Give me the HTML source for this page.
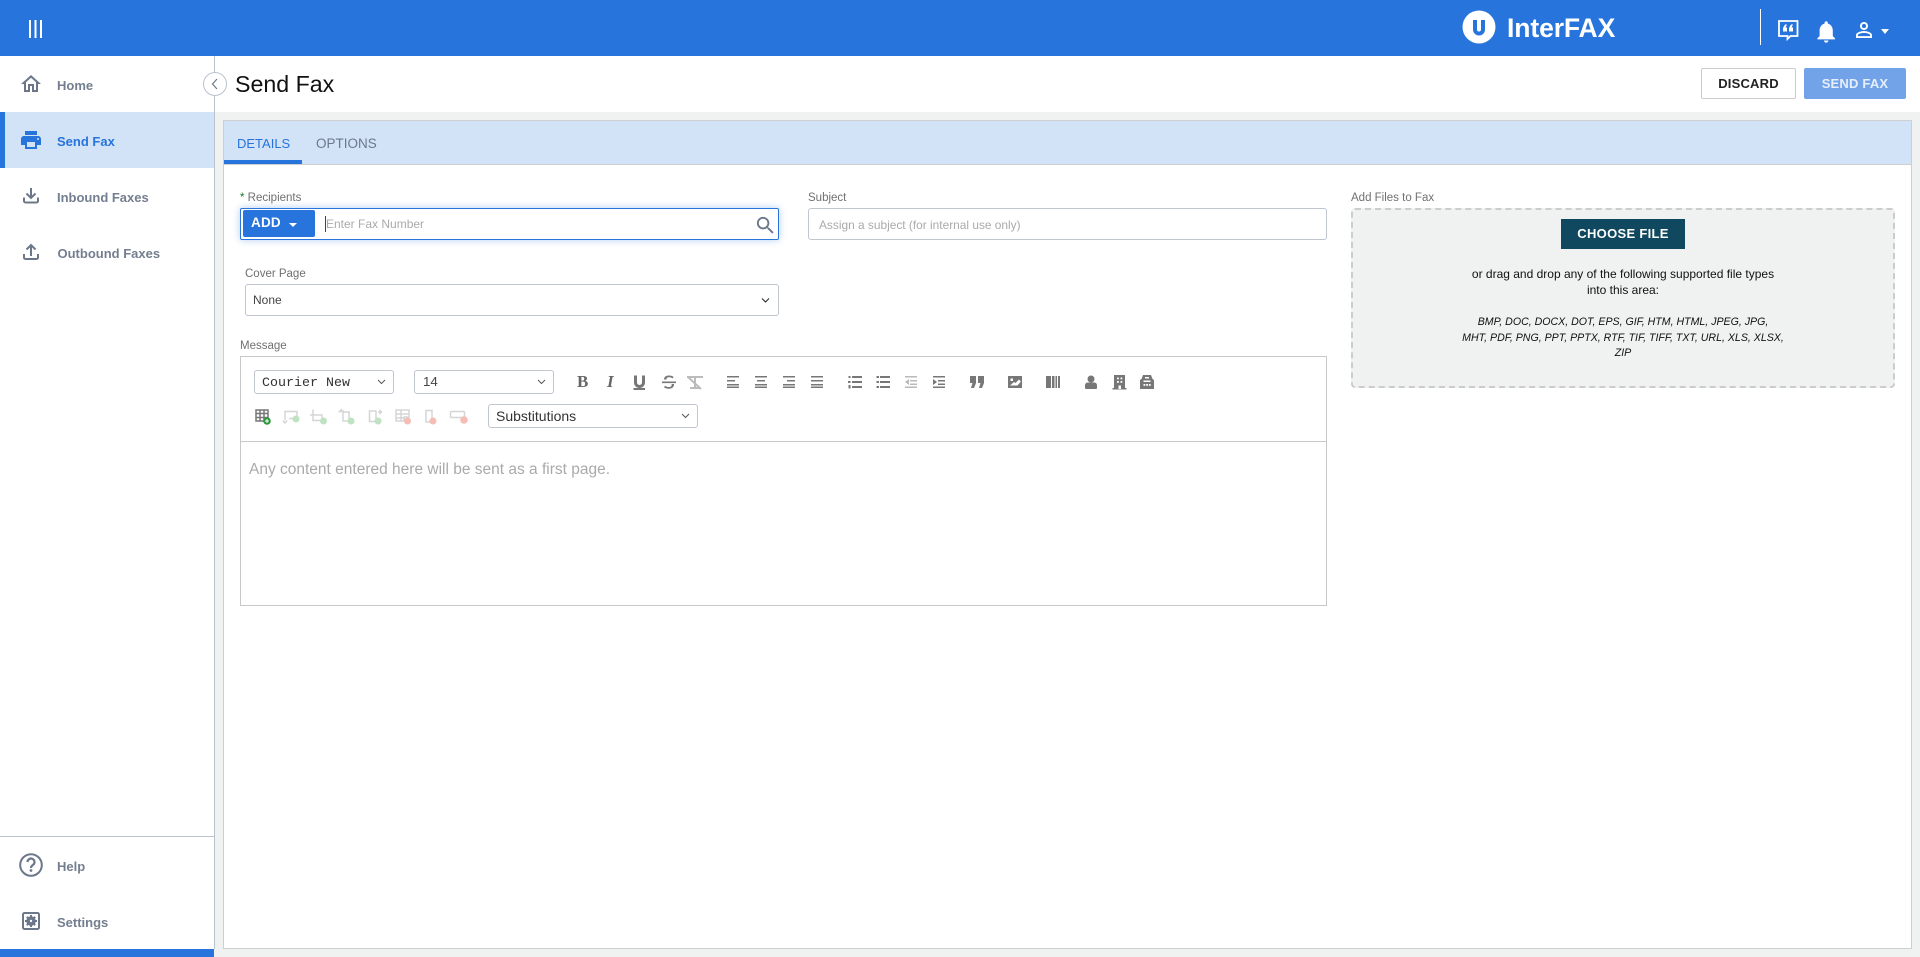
<!DOCTYPE html>
<html lang="en"><head><meta charset="utf-8"><title>Send Fax</title>
<style>
html,body{margin:0;padding:0;width:1920px;height:957px;overflow:hidden;background:#f0f2f2;font-family:"Liberation Sans",sans-serif}
.a{position:absolute;white-space:nowrap}
.box{position:absolute;box-sizing:border-box;background:#fff}
.nav{font-size:13px;font-weight:bold;color:#737e90;left:57px;line-height:20px}
.lab{font-size:11.5px;color:#707070;line-height:16px}
.ph{font-size:12px;color:#aaa;line-height:16px}
.sel{border:1px solid #bfc6cf;border-radius:3px}
.ctr{text-align:center}
</style></head><body>
<div class="a" style="left:0;top:0;width:1920px;height:56px;background:#2674dc"></div>
<div class="box" style="left:0;top:56px;width:214px;height:893px"></div>
<div class="a" style="left:214px;top:56px;width:1px;height:893px;background:#b9c3cf"></div>
<div class="a" style="left:0;top:949px;width:214px;height:8px;background:#2674dc"></div>
<div class="a" style="left:0;top:112px;width:214px;height:56px;background:#d2e2f7"></div>
<div class="a" style="left:0;top:112px;width:5px;height:56px;background:#2674dc"></div>
<div class="a" style="left:0;top:836px;width:214px;height:1px;background:#b9c3cf"></div>
<div class="a" style="left:215px;top:56px;width:1705px;height:56px;background:#fff"></div>

<div class="a nav" style="top:75.500px">Home</div>
<div class="a nav" style="top:131.500px;color:#2674dc">Send Fax</div>
<div class="a nav" style="top:187.500px">Inbound Faxes</div>
<div class="a nav" style="top:243.500px;left:57.500px">Outbound Faxes</div>
<div class="a nav" style="top:856.500px">Help</div>
<div class="a nav" style="top:912.500px">Settings</div>

<div class="a" style="left:235px;top:67.500px;font-size:23.200px;line-height:32px;color:#111">Send Fax</div>
<div class="box ctr" style="left:1701px;top:68px;width:95px;height:31px;border:1px solid #ccc;border-radius:2px;font-size:13px;font-weight:bold;line-height:29px;color:#222;letter-spacing:.2px">DISCARD</div>
<div class="box ctr" style="left:1804px;top:68px;width:102px;height:31px;background:#72a3e9;border-radius:2px;font-size:13px;font-weight:bold;line-height:31px;color:#e6effb;letter-spacing:.2px">SEND FAX</div>

<div class="a" style="left:1507px;top:11px;font-size:26.500px;font-weight:bold;line-height:34px;color:#fff;letter-spacing:-.1px">InterFAX</div>

<!-- card -->
<div class="box" style="left:223px;top:120px;width:1689px;height:829px;border:1px solid #ccd0d0"></div>
<div class="a" style="left:224px;top:121px;width:1687px;height:43px;background:#d2e2f7;border-bottom:1px solid #ccd0d0"></div>
<div class="a" style="left:224px;top:160px;width:78px;height:4px;background:#2674dc"></div>
<div class="a" style="left:237px;top:135px;font-size:13px;line-height:18px;color:#2674dc">DETAILS</div>
<div class="a" style="left:316px;top:135px;font-size:13.500px;line-height:18px;color:#6c778a">OPTIONS</div>

<!-- recipients -->
<div class="a lab" style="left:240px;top:190px"><span style="color:#1a7a2a">*</span> Recipients</div>
<div class="box" style="left:240px;top:208px;width:539px;height:32px;border:1px solid #2674dc;border-radius:2px;box-shadow:0 0 8px rgba(38,116,220,.35)"></div>
<div class="a" style="left:243px;top:210px;width:72px;height:27px;background:#2674dc;border-radius:2px"></div>
<div class="a" style="left:251px;top:214px;font-size:13.500px;font-weight:bold;line-height:18px;color:#fff;letter-spacing:.2px">ADD</div>
<div class="a" style="left:325px;top:216px;width:1px;height:16px;background:#444"></div>
<div class="a ph" style="left:326px;top:216px">Enter Fax Number</div>

<div class="a lab" style="left:808px;top:190px">Subject</div>
<div class="box sel" style="left:808px;top:208px;width:519px;height:32px"></div>
<div class="a ph" style="left:819px;top:217px;font-size:11.900px">Assign a subject (for internal use only)</div>

<div class="a lab" style="left:245px;top:265.500px">Cover Page</div>
<div class="box sel" style="left:245px;top:284px;width:534px;height:32px"></div>
<div class="a" style="left:253px;top:292px;font-size:12px;line-height:16px;color:#444">None</div>

<div class="a lab" style="left:240px;top:337.500px">Message</div>
<div class="box" style="left:240px;top:356px;width:1087px;height:250px;border:1px solid #c8c8c8"></div>
<div class="a" style="left:241px;top:441px;width:1085px;height:1px;background:#c8c8c8"></div>
<div class="box sel" style="left:254px;top:370px;width:140px;height:24px"></div>
<div class="a" style="left:262px;top:376px;font-family:'Liberation Mono',monospace;font-size:13.330px;line-height:16px;color:#333">Courier New</div>
<div class="box sel" style="left:414px;top:370px;width:140px;height:24px"></div>
<div class="a" style="left:423px;top:374px;font-size:13.330px;line-height:16px;color:#444">14</div>
<div class="box sel" style="left:488px;top:404px;width:210px;height:24px"></div>
<div class="a" style="left:496px;top:408px;font-size:14px;line-height:16px;color:#333">Substitutions</div>
<div class="a" style="left:249px;top:460px;font-size:15.500px;line-height:20px;color:#aaa">Any content entered here will be sent as a first page.</div>
<div class="a" style="left:577px;top:373px;font-family:'Liberation Serif',serif;font-size:17px;font-weight:bold;line-height:18px;color:#666">B</div>
<div class="a" style="left:607px;top:373px;font-family:'Liberation Serif',serif;font-size:17px;font-style:italic;font-weight:bold;line-height:18px;color:#666">I</div>

<!-- dropzone -->
<div class="a lab" style="left:1351px;top:190px">Add Files to Fax</div>
<div class="box" style="left:1351px;top:208px;width:544px;height:180px;background:#f0f2f2;border:2px dashed #ccc;border-radius:4px"></div>
<div class="box ctr" style="left:1561px;top:219px;width:124px;height:30px;background:#10495f;font-size:13px;font-weight:bold;line-height:30px;color:#fff;letter-spacing:.3px">CHOOSE FILE</div>
<div class="a ctr" style="left:1351px;top:266px;width:544px;font-size:12px;line-height:16px;color:#111">or drag and drop any of the following supported file types<br>into this area:</div>
<div class="a ctr" style="left:1351px;top:315px;width:544px;font-size:10.600px;line-height:15.600px;color:#111;font-style:italic">BMP, DOC, DOCX, DOT, EPS, GIF, HTM, HTML, JPEG, JPG,<br>MHT, PDF, PNG, PPT, PPTX, RTF, TIF, TIFF, TXT, URL, XLS, XLSX,<br>ZIP</div>

<svg class="a" style="left:0;top:0;pointer-events:none" width="1920" height="957" viewBox="0 0 1920 957">
<!-- top bar -->
<g fill="#fff">
<rect x="29" y="20" width="2" height="18"/><rect x="34.500" y="20" width="2" height="18"/><rect x="40" y="20" width="2" height="18"/>
<circle cx="1479" cy="27" r="16.500"/>
<rect x="1760" y="9" width="1" height="36"/>
<g transform="translate(1813,18.500) scale(1.100)"><path d="M12 22c1.100 0 2-.9 2-2h-4c0 1.100.89 2 2 2zm6-6v-5c0-3.070-1.640-5.640-4.500-6.320V4c0-.83-.67-1.500-1.500-1.500s-1.500.67-1.500 1.500v.68C7.630 5.360 6 7.920 6 11v5l-2 2v1h16v-1l-2-2z"/></g>
<g transform="translate(1852,18)"><path d="M12 5.900c1.160 0 2.100.94 2.100 2.100s-.94 2.100-2.100 2.100S9.900 9.160 9.900 8s.94-2.100 2.100-2.100m0 9c2.970 0 6.100 1.460 6.100 2.100v1.100H5.900V17c0-.64 3.130-2.100 6.100-2.100M12 4C9.790 4 8 5.790 8 8s1.790 4 4 4 4-1.790 4-4-1.790-4-4-4zm0 9c-2.670 0-8 1.340-8 4v3h16v-3c0-2.660-5.330-4-8-4z"/></g>
<path d="M1881 29h8l-4 5z"/>
<path d="M1783 31.500h4v-4h-1.500l1.500-3h-2l-2 3.500zM1789 31.500h4v-4h-1.500l1.500-3h-2l-2 3.500z"/>
</g>
<path d="M1779 21h18.500v15h-7l-3 3v-3h-8.500z" fill="none" stroke="#fff" stroke-width="1.800"/>
<path d="M1473 20v9.500a6 6 0 0 0 12 0V20h-4v9.500a2 2 0 0 1-4 0V20z" fill="#2674dc"/>

<!-- sidebar icons -->
<g transform="translate(19,72)" fill="#6c778a"><path d="M12 5.690l5 4.500V18h-2v-6H9v6H7v-7.810l5-4.500M12 3L2 12h3v8h6v-6h2v6h6v-8h3L12 3z"/></g>
<g transform="translate(19,128)" fill="#2674dc"><path d="M19 8H5c-1.660 0-3 1.340-3 3v6h4v4h12v-4h4v-6c0-1.660-1.340-3-3-3zm-3 11H8v-5h8v5zm3-7c-.55 0-1-.45-1-1s.45-1 1-1 1 .45 1 1-.45 1-1 1zm-1-9H6v4h12V3z"/></g>
<g fill="none" stroke="#6c778a" stroke-width="2">
<path d="M31 188v10M26.500 193.500l4.500 4.500 4.500-4.500M24 197.500v3.500a1.500 1.500 0 0 0 1.500 1.500h11a1.500 1.500 0 0 0 1.500-1.500v-3.500"/>
<path d="M31 256v-11M26.500 249.500l4.500-4.500 4.500 4.500M24 254v3.500a1.500 1.500 0 0 0 1.500 1.500h11a1.500 1.500 0 0 0 1.500-1.500V254"/>
<circle cx="31" cy="865" r="10.800"/>
<path d="M27.500 862a3.500 3.500 0 1 1 5.500 2.900c-1.300.9-2 1.500-2 3.100" stroke-width="2.200"/>
<rect x="23" y="913" width="16" height="16" rx="1.500"/>
</g>
<circle cx="31" cy="870.500" r="1.400" fill="#6c778a"/>
<circle cx="31" cy="921" r="4.800" fill="#6c778a"/><circle cx="31" cy="921" r="1.200" fill="#fff"/>
<g stroke="#6c778a" stroke-width="2"><path d="M31 915v2M31 925v2M25 921h2M35 921h2M26.800 916.800l1.500 1.500M33.700 923.700l1.500 1.500M35.200 916.800l-1.500 1.500M28.300 923.700l-1.500 1.500"/></g>

<!-- collapse -->
<circle cx="215" cy="84" r="11.500" fill="#fff" stroke="#b9c3cf" stroke-width="1"/>
<path d="M217 79l-4.500 5 4.500 5" fill="none" stroke="#6c778a" stroke-width="1.200"/>

<!-- field icons -->
<path d="M289 223h8l-4 4z" fill="#fff"/>
<g transform="translate(754,214) scale(.96)" fill="#6c778a"><path d="M15.500 14h-.79l-.28-.27C15.410 12.590 16 11.110 16 9.500 16 5.910 13.090 3 9.500 3S3 5.910 3 9.500 5.910 16 9.500 16c1.610 0 3.090-.59 4.230-1.570l.27.28v.79l5 4.990L20.490 19l-4.990-5zm-6 0C7.010 14 5 11.990 5 9.500S7.010 5 9.500 5 14 7.010 14 9.500 11.990 14 9.500 14z"/></g>
<g fill="none" stroke-width="1">
<path d="M762 298.500l3.500 3.500 3.500-3.500" stroke="#222"/>
<path d="M378 380l3.500 3.500 3.500-3.500" stroke="#555"/>
<path d="M538 380l3.500 3.500 3.500-3.500" stroke="#555"/>
<path d="M682 414l3.500 3.500 3.500-3.500" stroke="#555"/>
</g>

<!-- toolbar row 1 -->
<g fill="#777">
<path d="M634 375.500h3v7a2.500 2.500 0 0 0 5 0v-7h3v7a5.500 5.500 0 0 1-11 0zM633.500 388h11.500v2h-11.500z"/>
<path d="M662 381.500h14v1.600h-14zM664 379.500c0-3 2.500-4 5-4 2 0 3.500.5 4.700 1.500l-1.200 1.400c-1-.8-2.200-1.100-3.500-1.100-1.500 0-2.400.5-2.400 1.700v.5zM671.500 384c.7 2-.5 3-2.500 3-1.600 0-3-.5-4-1.300l-1 1.500c1.200 1 3 1.500 5 1.500 3 0 5.200-1.500 5-4.700z"/>
<rect x="727" y="376" width="12" height="1.500"/><rect x="727" y="380" width="8" height="1.500"/><rect x="727" y="384" width="12" height="1.500"/><rect x="727" y="386.500" width="12" height="1.500"/>
<rect x="755" y="376" width="12" height="1.500"/><rect x="757" y="380" width="8" height="1.500"/><rect x="755" y="384" width="12" height="1.500"/><rect x="755" y="386.500" width="12" height="1.500"/>
<rect x="783" y="376" width="12" height="1.500"/><rect x="787" y="380" width="8" height="1.500"/><rect x="783" y="384" width="12" height="1.500"/><rect x="783" y="386.500" width="12" height="1.500"/>
<rect x="811" y="376" width="12" height="1.500"/><rect x="811" y="380" width="12" height="1.500"/><rect x="811" y="384" width="12" height="1.500"/><rect x="811" y="386.500" width="12" height="1.500"/>
<rect x="852" y="376" width="10" height="2"/><rect x="852" y="381" width="10" height="2"/><rect x="852" y="386" width="10" height="2"/>
<rect x="848.500" y="376" width="2" height="2"/><rect x="848" y="381" width="2.500" height="2"/><rect x="848.500" y="385" width="2" height="3.500"/>
<rect x="880" y="376" width="10" height="2"/><rect x="880" y="381" width="10" height="2"/><rect x="880" y="386" width="10" height="2"/>
<rect x="876.500" y="376" width="2.500" height="2"/><rect x="876.500" y="381" width="2.500" height="2"/><rect x="876.500" y="386" width="2.500" height="2"/>
<g opacity=".5"><rect x="905" y="376" width="12" height="1.500"/><rect x="910" y="380" width="7" height="1.500"/><rect x="910" y="383.500" width="7" height="1.500"/><rect x="905" y="386.500" width="12" height="1.500"/><path d="M909 379v6l-4-3z"/></g>
<rect x="933" y="376" width="12" height="1.500"/><rect x="938" y="380" width="7" height="1.500"/><rect x="938" y="383.500" width="7" height="1.500"/><rect x="933" y="386.500" width="12" height="1.500"/><path d="M933 379v6l4-3z"/>
<path d="M970 376h6v7l-2 5h-3l1.500-5H970zM978 376h6v7l-2 5h-3l1.500-5H978z"/>
<path d="M1008 376h14v12h-14z"/>
<rect x="1046" y="376" width="5" height="12"/><rect x="1052" y="376" width="2.500" height="12"/><rect x="1055.500" y="376" width="1.500" height="12"/><rect x="1058" y="376" width="2" height="12"/>
<circle cx="1091" cy="379" r="3.500"/><path d="M1085 385a3 3 0 0 1 3-2.500h6a3 3 0 0 1 3 2.500v3a1 1 0 0 1-1 1h-10a1 1 0 0 1-1-1z"/>
<path d="M1114 375h11v13h1.500v1.500h-14V388h1.500z"/>
<path d="M1143 375h8l1.500 4c1 .3 1.500 1 1.500 2v8h-14v-8c0-1 .5-1.700 1.500-2z"/>
</g>
<path d="M1010 385.500l4-3.500 1.500 1 3.500-3.500 1.500 1.500v1l-3 3.500h-7.500zM1010.500 378.500h2.500v2.500h-2.500z" fill="#fff"/>
<g fill="#fff"><rect x="1117" y="377.500" width="1.800" height="1.800"/><rect x="1120.500" y="377.500" width="1.800" height="1.800"/><rect x="1117" y="381" width="1.800" height="1.800"/><rect x="1120.500" y="381" width="1.800" height="1.800"/><rect x="1118.500" y="385.500" width="2.500" height="3.500"/>
<rect x="1145" y="377" width="4" height="1.500"/><rect x="1143.500" y="380.500" width="7" height="1.500"/><rect x="1143.500" y="384" width="1.800" height="1.800"/><rect x="1146.200" y="384" width="1.800" height="1.800"/><rect x="1148.900" y="384" width="1.800" height="1.800"/></g>
<g fill="none" stroke="#bbb" stroke-width="2"><path d="M687 377h16M695 377v11M690 388h9M688 377l13 12"/></g>

<!-- toolbar row 2 -->
<g fill="none" stroke="#777" stroke-width="1.500"><path d="M256 410h12v11h-12zM256 413.500h12M256 417.500h12M260 410v11M264 410v11"/></g>
<circle cx="267" cy="421" r="3.800" fill="#2e9a3e"/><path d="M265 421h4M267 419v4" stroke="#fff"/>
<g fill="none" stroke="#d5d5d5" stroke-width="1.500">
<path d="M285 420v-8.500h12v7h-8M283 420.500l2 2.500 2-2.500"/>
<path d="M313 409.500v11h9v-5.500h-12"/><path d="M322 415v0"/>
<path d="M342 409l-2.500 2.500h3M343 410v11h6v-9h-6M343 412h7"/>
<path d="M369.500 411h6.500v10.500h-6.500zM378 412h3M379.500 410l2 2-2 2"/>
<path d="M396 410h13v7h-5v4h-8zM396 414h13M396 418h8M401 410v11"/>
<path d="M426 410.500h6v11.500h-6z"/>
<rect x="450.500" y="411.500" width="14" height="6" rx="1"/>
</g>
<g><circle cx="296" cy="419" r="3.500" fill="#bfe3c2"/><circle cx="323.500" cy="421" r="3.500" fill="#bfe3c2"/><circle cx="351" cy="421" r="3.500" fill="#bfe3c2"/><circle cx="378" cy="421" r="3.500" fill="#bfe3c2"/>
<circle cx="407.500" cy="421" r="3.500" fill="#f6bdb6"/><circle cx="433" cy="421" r="3.500" fill="#f6bdb6"/><circle cx="464" cy="420" r="3.800" fill="#f6bdb6"/></g>
</svg>
</body></html>
